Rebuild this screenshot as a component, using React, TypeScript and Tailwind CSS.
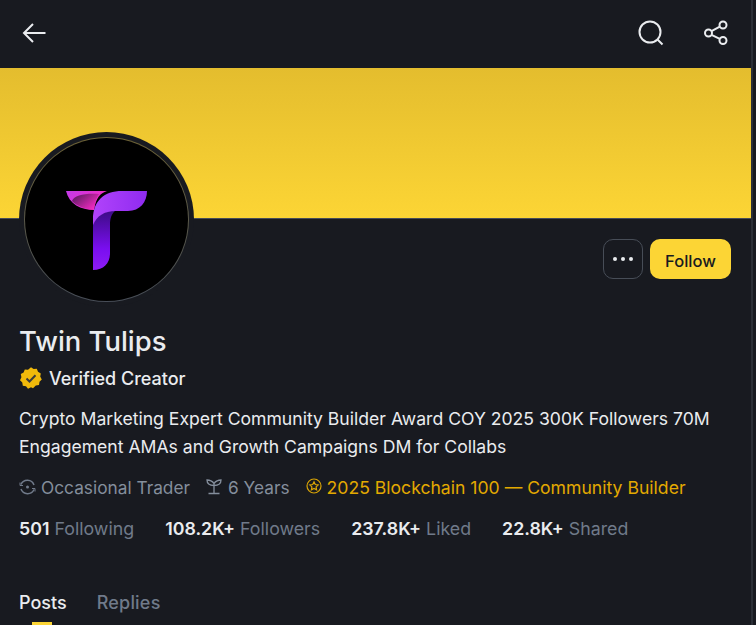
import React from "react";

const font = { fontFamily: "Inter, 'Liberation Sans', sans-serif" };

function Logo() {
  return (
    <svg width="84" height="82" viewBox="0 0 84 82" className="block">
      <defs>
        <linearGradient id="a" x1="0" y1="0" x2="1" y2="0.4">
          <stop offset="0" stopColor="#c23be8" />
          <stop offset="1" stopColor="#f52bc4" />
        </linearGradient>
        <linearGradient id="b" x1="0" y1="0" x2="1" y2="0.7">
          <stop offset="0" stopColor="#4a1a55" />
          <stop offset="1" stopColor="#f52bc4" />
        </linearGradient>
        <linearGradient id="c" x1="0" y1="0" x2="1" y2="0">
          <stop offset="0" stopColor="#b143fb" />
          <stop offset="1" stopColor="#8f2bf0" />
        </linearGradient>
        <linearGradient id="d" x1="0" y1="0" x2="0" y2="1">
          <stop offset="0" stopColor="#3b0c82" />
          <stop offset="0.65" stopColor="#7a0ef0" />
          <stop offset="1" stopColor="#8d1cf5" />
        </linearGradient>
      </defs>
      <path d="M0 0H41C34 2 30 7 28 19C15 19 3 13 0 0Z" fill="url(#a)" />
      <path d="M6 10C8 4 20 2 33 3C30 7 29 12 28 18C20 19 11 15 6 10Z" fill="url(#b)" />
      <path d="M27 79V30C32 25 38 20 50 19C45 23 44 28 44 34V62C44 72 38 79 27 79Z" fill="url(#d)" />
      <path d="M27 34V28C27 10 38 0 56 0H81C81 11 74 20 62 20H50C38 20 31 25 27 34Z" fill="url(#c)" />
    </svg>
  );
}

function Badge() {
  return (
    <svg width="24" height="24" viewBox="0 0 24 24">
      <path
        d="M12 1.200l2.600 1.900 3.200-.3 1.200 3 2.800 1.600-.6 3.200 1.600 2.800-2.300 2.300-.5 3.200-3.200.6L14 22.200l-2-1-3 1.500-2-2.500-3.200-.5-.5-3.200L1 14.200l1.400-2.900L1.800 8l2.800-1.500 1.200-3 3.200.2z"
        fill="#f0b90b"
      />
      <path d="M7.500 12.500l3 3 6-6.200" fill="none" stroke="#3a3a3a" strokeWidth="2" />
    </svg>
  );
}

function Stat({ value, label }: { value: string; label: string }) {
  return (
    <div className="text-[17.800px] leading-6 whitespace-nowrap">
      <span className="font-semibold text-[#eaecef]">{value}</span>{" "}
      <span className="text-[#707a8a]">{label}</span>
    </div>
  );
}

export default function App() {
  return (
    <div style={font} className="h-[625px] w-[756px] overflow-hidden bg-[#181a20] flex">
      <div className="w-[751px] shrink-0 flex flex-col">
        <header className="h-[68px] shrink-0 flex items-center justify-between pl-[21px] pr-[22px] pb-[2px]">
          <svg width="26" height="26" viewBox="0 0 26 26" fill="none" stroke="#eaecef" strokeWidth="2">
            <path d="M24.500 13H3M12 4l-9 9 9 9" />
          </svg>
          <div className="flex items-center gap-[39px]">
            <svg width="26" height="26" viewBox="0 0 26 26" fill="none" stroke="#eaecef" strokeWidth="2">
              <circle cx="12" cy="12" r="10.500" />
              <path d="M19.500 19.500l5 5" />
            </svg>
            <svg width="26" height="26" viewBox="0 0 26 26" fill="none" stroke="#eaecef" strokeWidth="2">
              <circle cx="5.500" cy="13" r="3.500" />
              <circle cx="20" cy="5" r="3.500" />
              <circle cx="20" cy="20.500" r="3.500" />
              <path d="M8.500 11.200l8.300-4.600M8.500 14.800l8.300 4" />
            </svg>
          </div>
        </header>
        <div className="h-[151px] shrink-0 bg-gradient-to-b from-[#e4bd2e] to-[#fcd535] border-b border-[#474d57]" />
        <div className="relative flex-1 px-[19px]">
          <div className="absolute left-[19px] top-[-87px] w-[175px] h-[175px] rounded-full bg-[#181a20] flex items-center justify-center">
            <div className="w-[165px] h-[165px] rounded-full bg-gradient-to-b from-[#6e6335] to-[#474d57] p-px">
              <div className="w-full h-full rounded-full bg-black flex items-center justify-center pl-[3px] pt-[25px]">
                <Logo />
              </div>
            </div>
          </div>
          <div className="flex justify-end items-start gap-[7px] pt-[20px] pr-[1px] h-[106px]">
            <button className="w-10 h-10 rounded-[10px] border border-[#474d57] flex items-center justify-center gap-[3.500px]">
              <span className="w-[4.500px] h-[4.500px] rounded-full bg-[#eaecef]" />
              <span className="w-[4.500px] h-[4.500px] rounded-full bg-[#eaecef]" />
              <span className="w-[4.500px] h-[4.500px] rounded-full bg-[#eaecef]" />
            </button>
            <button className="w-[81px] h-10 pt-[4px] rounded-[10px] bg-[#fcd535] text-[#181a20] text-[16.500px] font-medium">
              Follow
            </button>
          </div>
          <h1 className="text-[27.400px] leading-[32px] font-medium text-[#eaecef]">Twin Tulips</h1>
          <div className="flex items-center gap-[6px] mt-[9px] h-6">
            <Badge />
            <span className="text-[18px] font-medium text-[#eaecef]">Verified Creator</span>
          </div>
          <p className="mt-[15px] text-[17.600px] leading-[28px] text-[#eaecef] w-[715px]">
            Crypto Marketing Expert Community Builder Award COY 2025 300K Followers 70M Engagement AMAs and Growth Campaigns DM for Collabs
          </p>
          <div className="mt-[15px] flex items-center h-6 text-[17.300px] whitespace-nowrap">
            <svg width="17" height="18" viewBox="0 0 17 18" fill="none" stroke="#707a8a" strokeWidth="1.500" className="mr-[5px] mb-[3px]">
              <path d="M2 6.500A7 7 0 0 1 15 7M15 11.500A7 7 0 0 1 2 11" />
              <path d="M1 4.500v3h3M16 13.500v-3h-3" strokeWidth="1" />
              <circle cx="8.500" cy="9" r="1.500" fill="#707a8a" stroke="none" />
            </svg>
            <span className="text-[#848e9c]">Occasional Trader</span>
            <svg width="16" height="18" viewBox="0 0 16 18" fill="none" stroke="#848e9c" strokeWidth="1.300" className="ml-[16px] mr-[6px] mb-[3px]">
              <path d="M1 2c0 4 3 5.500 7 5.500S15 6 15 2c-3 0-5 .8-7 3.500C6 2.800 4 2 1 2zM8 5.500V15M2.500 15.500h11" />
            </svg>
            <span className="text-[#848e9c]">6 Years</span>
            <svg width="16" height="16" viewBox="0 0 16 16" fill="none" stroke="#d9a406" strokeWidth="1.200" className="ml-[16px] mr-[5px] mb-[4px]">
              <circle cx="8" cy="8" r="7" />
              <path d="M8 3.800l1.300 2.700 2.900.4-2.100 2 .5 2.900L8 10.400l-2.600 1.400.5-2.900-2.100-2 2.900-.4z" />
            </svg>
            <span className="text-[#e3a900] text-[17.600px]">2025 Blockchain 100 — Community Builder</span>
          </div>
          <div className="mt-[17px] flex items-center gap-[31px]">
            <Stat value="501" label="Following" />
            <Stat value="108.2K+" label="Followers" />
            <Stat value="237.8K+" label="Liked" />
            <Stat value="22.8K+" label="Shared" />
          </div>
          <div className="mt-[50px] flex gap-[30px] text-[18px] leading-6 font-medium">
            <div className="relative text-[#eaecef]">
              Posts
              <span className="absolute left-[13px] top-[31px] w-5 h-1 bg-[#fcd535]" />
            </div>
            <div className="text-[#707a8a] tracking-[0.2px]">Replies</div>
          </div>
        </div>
      </div>
      <div className="w-[2px] shrink-0 bg-[#2b2f36]" />
      <div className="flex-1 bg-[#181a20]" />
    </div>
  );
}
